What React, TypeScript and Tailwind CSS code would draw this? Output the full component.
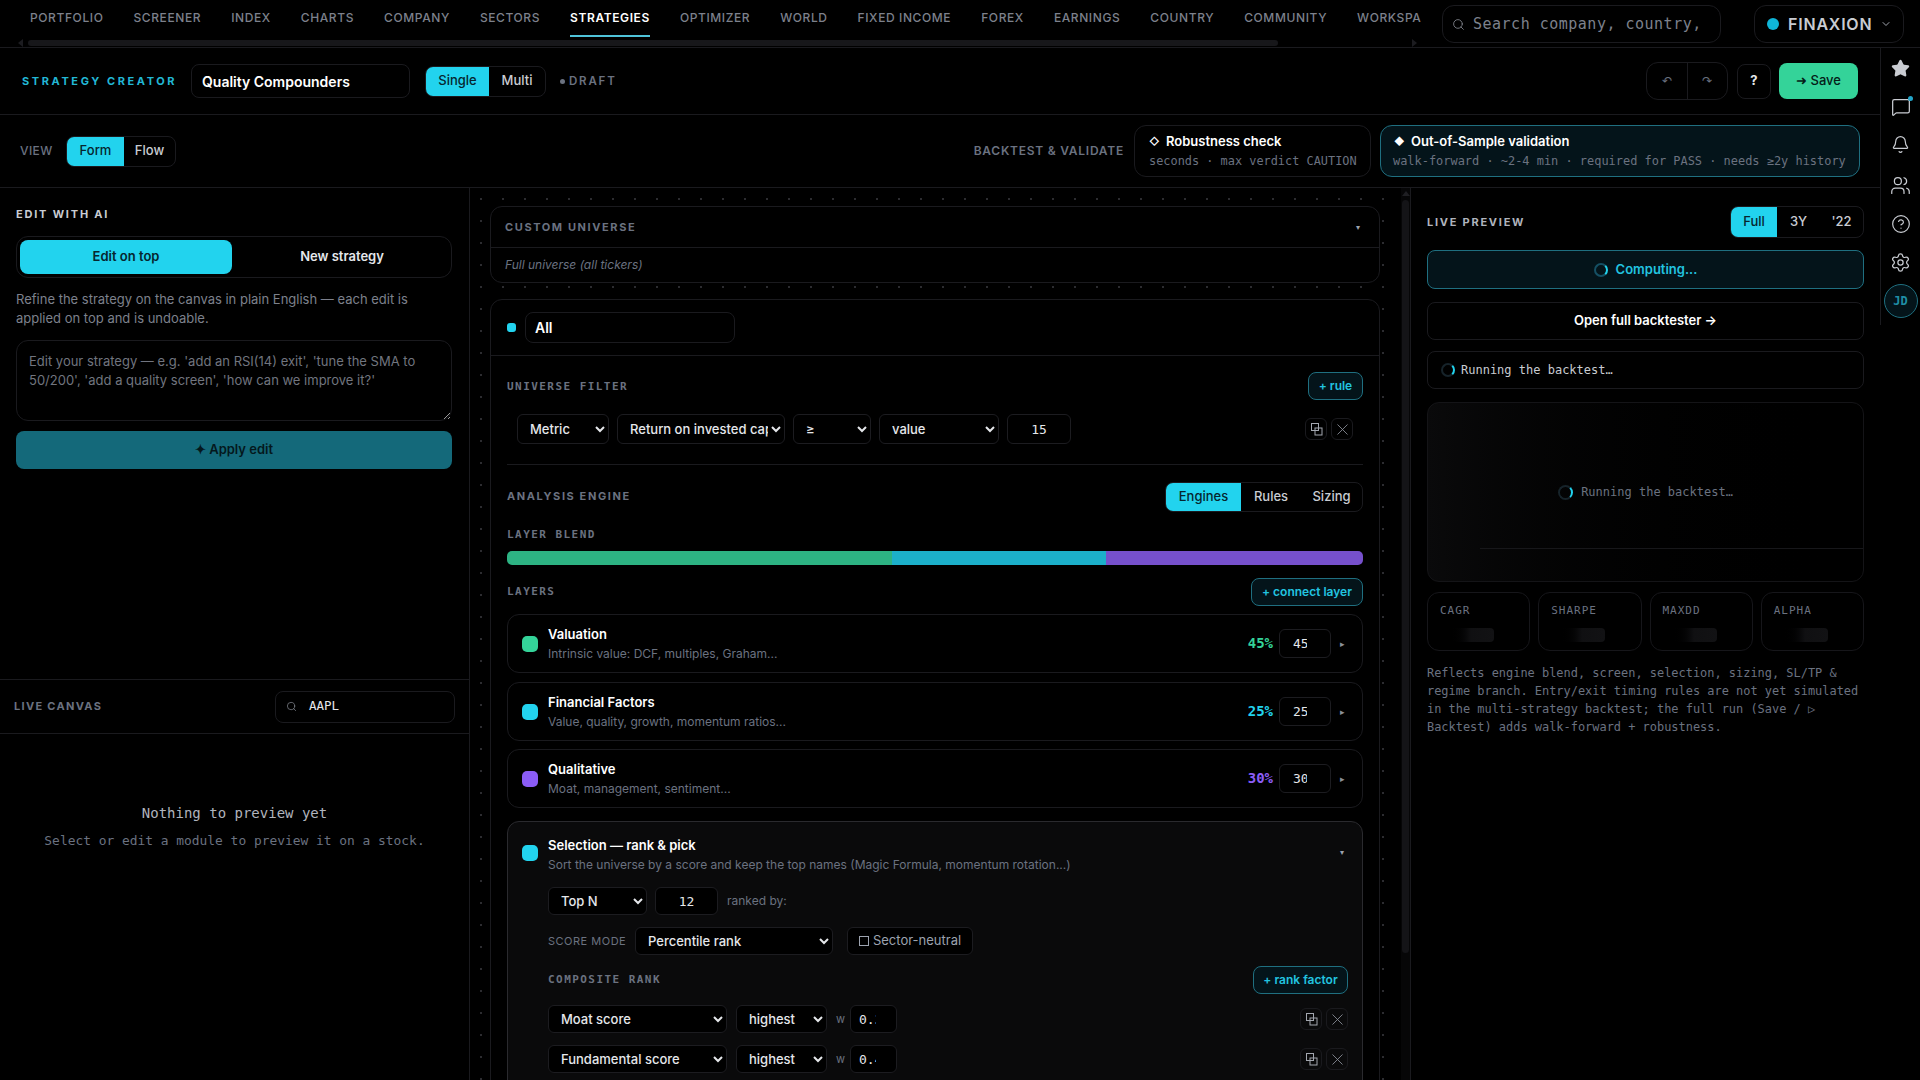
import React from "react";
import { Search, ChevronDown, Star, MessageSquare, Bell, Users, CircleHelp, Settings, X } from "lucide-react";

const MONO = "font-['DejaVu_Sans_Mono',monospace]";

function Sel({ cls, children }: { cls: string; children: string }) {
  return (
    <select className={"h-full rounded-md border border-[#1c1c20] bg-black pl-2 text-[13px] font-medium text-[#e5e7eb] [color-scheme:dark] " + cls}>
      <option>{children}</option>
    </select>
  );
}

function Num({ cls, v, type }: { cls: string; v: string; type?: string }) {
  return (
    <input type={type ?? "number"} defaultValue={v} className={"h-full rounded-md border border-[#1c1c20] bg-black text-[13px] text-[#e5e7eb] [color-scheme:dark] font-['DejaVu_Sans_Mono',monospace] " + cls} />
  );
}

function CopyIcon() {
  return (
    <svg width="13" height="13" viewBox="0 0 13 13" fill="none" stroke="#a3a7b0" strokeWidth="1">
      <rect x="1.5" y="0.5" width="7" height="7" />
      <rect x="5" y="5" width="7" height="7" />
    </svg>
  );
}

function RowActions({ cls }: { cls: string }) {
  return (
    <div className={"flex items-center gap-[4px] " + cls}>
      <div className="flex h-[22px] w-[22px] items-center justify-center rounded-md border border-[#1a1a1e]"><CopyIcon /></div>
      <div className="flex h-[22px] w-[22px] items-center justify-center rounded-md border border-[#1a1a1e]"><X size={19} strokeWidth={1.1} color="#8b8f98" /></div>
    </div>
  );
}

function Spinner({ cls }: { cls: string }) {
  return <div className={"rounded-full border-2 border-[#16232a] border-r-[#22d3ee] " + cls} />;
}

function MonoLabel({ children }: { children: string }) {
  return <div className="font-['DejaVu_Sans_Mono',monospace] text-[11px] font-bold tracking-[1.45px] text-[#6b7280]">{children}</div>;
}

function Layer({ color, text, title, desc, pct }: { color: string; text: string; title: string; desc: string; pct: string }) {
  return (
    <div className="flex h-[59px] items-center rounded-xl border border-[#1a1a1e] pl-[14px] pr-[14px]">
      <div className={"h-[16px] w-[16px] rounded-[5px] " + color} />
      <div className="ml-[10px] flex-1">
        <div className="text-[13px] font-semibold leading-[18px] text-white">{title}</div>
        <div className="mt-[2px] text-[12px] leading-[18px] text-[#6b7280]">{desc}</div>
      </div>
      <div className={"font-['DejaVu_Sans_Mono',monospace] text-[14px] font-bold " + text}>{pct}%</div>
      <div className="ml-[6px] h-[29px]"><Num cls="w-[52px] pl-[13px] pr-[8px] text-center" v={pct} /></div>
      <div className="ml-[9px] w-[8px] text-[9px] text-[#8b8f98]">▸</div>
    </div>
  );
}

function Metric({ label }: { label: string }) {
  return (
    <div className="h-[59px] flex-1 rounded-xl border border-[#16161a] pl-[12px] pt-[10px]">
      <div className="font-['DejaVu_Sans_Mono',monospace] text-[11px] leading-[16px] tracking-[1px] text-[#6b7280]">{label}</div>
      <div className="ml-[8px] mt-[9px] h-[14px] w-[46px] rounded bg-gradient-to-r from-black via-[#101012] to-[#121214]" />
    </div>
  );
}

const NAV = ["PORTFOLIO", "SCREENER", "INDEX", "CHARTS", "COMPANY", "SECTORS", "STRATEGIES", "OPTIMIZER", "WORLD", "FIXED INCOME", "FOREX", "EARNINGS", "COUNTRY", "COMMUNITY", "WORKSPACE"];

export default function App() {
  return (
    <div className="flex h-screen w-full flex-col overflow-hidden bg-black font-['Inter',sans-serif] text-[#e5e7eb]">
      {/* top nav */}
      <div className="flex h-[48px] shrink-0 items-start border-b border-[#1a1a1e]">
        <div className="w-[1421px] shrink-0 overflow-hidden">
          <div className="flex h-[37px] items-start gap-[30px] pl-[30px]">
            {NAV.map((n) => (
              <div key={n} className={n === "STRATEGIES" ? "flex h-[37px] shrink-0 items-center border-b-2 border-[#4fc3d9] pt-[1px] text-[12px] font-semibold tracking-[0.6px] text-white" : "flex h-[37px] shrink-0 items-center pb-[1px] text-[12px] font-medium tracking-[0.6px] text-[#7d818c]"}>{n}</div>
            ))}
          </div>
          <div className="mt-[2px] flex items-center pl-[18px]">
            <div className="h-0 w-0 border-y-[4px] border-r-[5px] border-y-transparent border-r-[#1c1c20]" />
            <div className="ml-[5px] h-[6px] w-[1250px] rounded-full bg-[#17171a]" />
            <div className="ml-[134px] h-0 w-0 border-y-[4px] border-l-[5px] border-y-transparent border-l-[#1c1c20]" />
          </div>
        </div>
        <div className="ml-[21px] mt-[5px] flex h-[38px] w-[279px] items-center overflow-hidden rounded-xl border border-[#1a1a1e] pl-[9px]">
          <Search size={13} strokeWidth={1.5} color="#8b8f98" className="shrink-0" />
          <div className={MONO + " ml-[8px] whitespace-nowrap text-[15px] tracking-[0.5px] text-[#7d818c]"}>Search company, country,</div>
        </div>
        <div className="ml-[33px] mt-[5px] flex h-[38px] w-[150px] items-center rounded-xl border border-[#1a1a1e] pl-[12px]">
          <div className="h-[12px] w-[12px] rounded-full bg-[#0fb5d8]" />
          <div className="ml-[9px] text-[16px] font-semibold tracking-[0.8px] text-[#c9ccd2]">FINAXION</div>
          <ChevronDown size={12} color="#a0a4ad" className="ml-[8px]" />
        </div>
      </div>

      <div className="flex min-h-0 flex-1">
        {/* main */}
        <div className="flex min-w-0 flex-1 flex-col">
          {/* header */}
          <div className="flex h-[67px] shrink-0 items-center border-b border-[#1a1a1e] pl-[22px] pr-[22px]">
            <div className="w-[169px] whitespace-nowrap text-[11px] font-bold tracking-[2.6px] text-[#22b8d6]">STRATEGY CREATOR</div>
            <div className="flex h-[34px] w-[219px] items-center rounded-lg border border-[#1a1a1e] pl-[10px] text-[14px] font-semibold text-white">Quality Compounders</div>
            <div className="ml-[15px] flex h-[31px] w-[121px] overflow-hidden rounded-lg border border-[#1a1a1e]">
              <div className="flex w-[63px] items-center justify-center bg-[#22d3ee] text-[13px] font-medium text-[#06262e]">Single</div>
              <div className="flex flex-1 items-center justify-center text-[13px] font-medium text-[#c9ccd2]">Multi</div>
            </div>
            <div className="ml-[14px] flex items-center pt-[1px] text-[11.5px] font-semibold tracking-[1.8px] text-[#6b7280]">
              <div className="mr-[4px] h-[5px] w-[5px] rounded-full bg-[#6b7280]" />DRAFT
            </div>
            <div className="flex-1" />
            <div className="flex h-[38px] w-[82px] rounded-xl border border-[#1a1a1e] text-[12px] text-[#6b7280]">
              <div className="flex flex-1 items-center justify-center border-r border-[#1a1a1e]">↶</div>
              <div className="flex flex-1 items-center justify-center">↷</div>
            </div>
            <div className="ml-[9px] flex h-[35px] w-[34px] items-center justify-center rounded-lg border border-[#1a1a1e] text-[13px] font-bold text-[#e5e7eb]">?</div>
            <div className="ml-[8px] flex h-[36px] w-[79px] items-center justify-center rounded-lg bg-[#34d399] text-[13px] font-medium text-[#042017]">➜&nbsp;Save</div>
          </div>
          {/* toolbar */}
          <div className="flex h-[73px] shrink-0 items-center border-b border-[#1a1a1e] pl-[20px] pr-[20px]">
            <div className="w-[46px] text-[12px] font-medium tracking-[0.4px] text-[#6b7280]">VIEW</div>
            <div className="flex h-[31px] w-[110px] overflow-hidden rounded-lg border border-[#1a1a1e]">
              <div className="flex w-[57px] items-center justify-center bg-[#22d3ee] text-[13px] font-medium text-[#06262e]">Form</div>
              <div className="flex flex-1 items-center justify-center text-[13px] font-medium text-[#c9ccd2]">Flow</div>
            </div>
            <div className="flex-1" />
            <div className="text-[12px] font-semibold tracking-[0.75px] text-[#6b7280]">BACKTEST &amp; VALIDATE</div>
            <div className="ml-[10px] h-[52px] w-[237px] rounded-xl border border-[#1a1a1e] pl-[14px] pt-[6px]">
              <div className="flex items-center text-[13px] font-semibold leading-[18px] text-white"><span className="w-[17px] text-[10px] font-bold">◇</span>Robustness check</div>
              <div className={MONO + " mt-[2px] whitespace-nowrap text-[11.9px] leading-[18px] text-[#6b7280]"}>seconds · max verdict CAUTION</div>
            </div>
            <div className="ml-[9px] h-[52px] w-[480px] rounded-xl border border-[#1f6f80] bg-[#04141a] pl-[12px] pt-[6px]">
              <div className="flex items-center text-[13px] font-semibold leading-[18px] text-white"><span className="w-[18px] pl-[1px] text-[10px]">◆</span>Out-of-Sample validation</div>
              <div className={MONO + " mt-[2px] whitespace-nowrap text-[11.95px] leading-[18px] text-[#6b7280]"}>walk-forward · ~2-4 min · required for PASS · needs ≥2y history</div>
            </div>
          </div>

          {/* columns */}
          <div className="flex min-h-0 flex-1">
            {/* left */}
            <div className="flex w-[470px] shrink-0 flex-col border-r border-[#1a1a1e]">
              <div className="h-[492px] shrink-0 border-b border-[#1a1a1e] pl-[16px] pr-[17px] pt-[19px]">
                <div className="text-[11px] font-bold leading-[14px] tracking-[1.8px] text-[#c9ccd2]">EDIT WITH AI</div>
                <div className="mt-[15px] flex h-[42px] items-center rounded-xl border border-[#1a1a1e] px-[3px]">
                  <div className="flex h-[34px] w-[212px] items-center justify-center rounded-lg bg-[#22d3ee] text-[13px] font-semibold text-[#06262e]">Edit on top</div>
                  <div className="flex flex-1 items-center justify-center pl-[4px] text-[13px] font-semibold text-[#e5e7eb]">New strategy</div>
                </div>
                <div className="mt-[12px] text-[13px] leading-[19px] text-[#7d818c]">Refine the strategy on the canvas in plain English — each edit is applied on top and is undoable.</div>
                <textarea
                  className="mt-[12px] block h-[81px] w-full rounded-xl border border-[#1a1a1e] bg-black px-[12px] pb-[8px] pt-[11px] text-[13px] leading-[19px] text-[#e5e7eb] [color-scheme:dark] placeholder:text-[#71757f]"
                  placeholder="Edit your strategy — e.g. 'add an RSI(14) exit', 'tune the SMA to 50/200', 'add a quality screen', 'how can we improve it?'"
                />
                <div className="mt-[10px] flex h-[38px] items-center justify-center rounded-lg bg-[#14697a] text-[13px] font-semibold text-[#04181d]">✦ Apply edit</div>
              </div>
              <div className="flex h-[54px] shrink-0 items-center justify-between border-b border-[#1a1a1e] pl-[14px] pr-[14px]">
                <div className="text-[11px] font-bold tracking-[1.3px] text-[#6b7280]">LIVE CANVAS</div>
                <div className="flex h-[32px] w-[180px] items-center rounded-lg border border-[#1a1a1e] pl-[10px]">
                  <Search size={11} strokeWidth={1.5} color="#8b8f98" />
                  <div className={MONO + " ml-[12px] text-[12.5px] font-medium text-[#e5e7eb]"}>AAPL</div>
                </div>
              </div>
              <div className="pt-[69px] text-center">
                <div className={MONO + " text-[14px] leading-[20px] text-[#b0b4bd]"}>Nothing to preview yet</div>
                <div className={MONO + " mt-[8px] text-[12.9px] leading-[20px] text-[#6b7280]"}>Select or edit a module to preview it on a stock.</div>
              </div>
            </div>

            {/* center */}
            <div className="flex w-[940px] shrink-0 overflow-hidden">
              <div className="min-w-0 flex-1 overflow-hidden bg-[radial-gradient(#2c2c30_1px,transparent_1px)] bg-[size:22px_22px] pl-[20px] pr-[21px] pt-[18px]">
                <div className="h-[77px] rounded-xl border border-[#1a1a1e] bg-black">
                  <div className="flex h-[41px] items-center justify-between border-b border-[#1a1a1e] pl-[14px] pr-[19px]">
                    <div className="text-[11px] font-bold tracking-[1.6px] text-[#6b7280]">CUSTOM UNIVERSE</div>
                    <div className="text-[8px] text-[#9ca3af]">▾</div>
                  </div>
                  <div className="flex h-[34px] items-center pl-[14px] text-[12px] italic text-[#6b7280]">Full universe (all tickers)</div>
                </div>
                <div className="mt-[16px] rounded-xl border border-[#1a1a1e] bg-black pb-[40px]">
                  <div className="flex h-[56px] items-center border-b border-[#1a1a1e] pl-[16px]">
                    <div className="h-[9px] w-[9px] rounded-[3px] bg-[#22d3ee]" />
                    <div className="ml-[9px] flex h-[31px] w-[210px] items-center rounded-lg border border-[#1a1a1e] pl-[9px] text-[14px] font-semibold text-white">All</div>
                  </div>
                  <div className="pl-[16px] pr-[16px]">
                    <div className="mt-[16px] flex h-[28px] items-center justify-between">
                      <div className="pt-[2px]"><MonoLabel>UNIVERSE FILTER</MonoLabel></div>
                      <div className="flex h-[28px] w-[55px] items-center justify-center rounded-lg border border-[#1f6f80] bg-[#04141a] text-[12px] font-semibold text-[#22c4e0]">+ rule</div>
                    </div>
                    <div className="mt-[14px] flex h-[30px] items-center gap-[8px] pl-[10px]">
                      <Sel cls="w-[92px]">Metric</Sel>
                      <Sel cls="w-[168px]">Return on invested capital</Sel>
                      <Sel cls="w-[78px]">≥</Sel>
                      <Sel cls="w-[120px]">value</Sel>
                      <Num cls="w-[64px] px-2 text-center" v="15" type="text" />
                      <RowActions cls="ml-auto mr-[10px]" />
                    </div>
                    <div className="mt-[20px] h-px bg-[#1a1a1e]" />
                    <div className="mt-[17px] flex h-[30px] items-center justify-between">
                      <div className="pb-[2px] text-[11px] font-bold tracking-[1.6px] text-[#6b7280]">ANALYSIS ENGINE</div>
                      <div className="flex h-[30px] w-[198px] overflow-hidden rounded-lg border border-[#1a1a1e] text-[13px] font-medium">
                        <div className="flex w-[75px] items-center justify-center bg-[#22d3ee] text-[#06262e]">Engines</div>
                        <div className="flex w-[60px] items-center justify-center text-[#c9ccd2]">Rules</div>
                        <div className="flex flex-1 items-center justify-center text-[#c9ccd2]">Sizing</div>
                      </div>
                    </div>
                    <div className="mt-[15px] leading-[15px]"><MonoLabel>LAYER BLEND</MonoLabel></div>
                    <div className="mt-[9px] flex h-[14px] overflow-hidden rounded-[5px]">
                      <div className="w-[45%] bg-[#2db383]" />
                      <div className="w-[25%] bg-[#1cb0ca]" />
                      <div className="w-[30%] bg-[#7650cc]" />
                    </div>
                    <div className="mt-[13px] flex h-[28px] items-center justify-between">
                      <MonoLabel>LAYERS</MonoLabel>
                      <div className="flex h-[28px] w-[112px] items-center justify-center rounded-lg border border-[#1f6f80] bg-[#04141a] text-[12px] font-semibold text-[#22c4e0]">+ connect layer</div>
                    </div>
                    <div className="mt-[8px] flex flex-col">
                      <Layer color="bg-[#34d399]" text="text-[#34d399]" title="Valuation" desc="Intrinsic value: DCF, multiples, Graham..." pct="45" />
                      <div className="mt-[9px]"><Layer color="bg-[#22d3ee]" text="text-[#22d3ee]" title="Financial Factors" desc="Value, quality, growth, momentum ratios..." pct="25" /></div>
                      <div className="mt-[8px]"><Layer color="bg-[#8b5cf6]" text="text-[#8b5cf6]" title="Qualitative" desc="Moat, management, sentiment..." pct="30" /></div>
                    </div>
                    {/* selection */}
                    <div className="mt-[13px] rounded-xl border border-[#2a2a2e] bg-[#0a0a0b] pb-[40px] pl-[40px] pr-[14px] pt-[14px]">
                      <div className="relative">
                        <div className="absolute left-[-26px] top-[9px] h-[16px] w-[16px] rounded-[5px] bg-[#22d3ee]" />
                        <div className="text-[13px] font-semibold leading-[18px] text-white">Selection — rank &amp; pick</div>
                        <div className="mt-[2px] text-[12px] leading-[18px] text-[#6b7280]">Sort the universe by a score and keep the top names (Magic Formula, momentum rotation...)</div>
                        <div className="absolute right-[4px] top-[10px] text-[8px] text-[#9ca3af]">▾</div>
                      </div>
                      <div className="mt-[13px] flex h-[28px] items-center gap-[8px]">
                        <Sel cls="w-[99px]">Top N</Sel>
                        <Num cls="w-[63px] px-2 text-center" v="12" type="text" />
                        <div className="ml-[1px] text-[12px] text-[#6b7280]">ranked by:</div>
                      </div>
                      <div className="mt-[12px] flex h-[28px] items-center">
                        <div className="w-[87px] text-[11px] tracking-[0.5px] text-[#6b7280]">SCORE MODE</div>
                        <Sel cls="w-[198px]">Percentile rank</Sel>
                        <div className="ml-[14px] flex h-[28px] w-[126px] items-center justify-center rounded-md border border-[#1c1c20] bg-black text-[13px] text-[#9ca3af]"><span className="mr-[4px] h-[10px] w-[10px] border border-[#9ca3af]" />Sector-neutral</div>
                      </div>
                      <div className="mt-[11px] flex h-[28px] items-center justify-between">
                        <MonoLabel>COMPOSITE RANK</MonoLabel>
                        <div className="flex h-[28px] w-[95px] items-center justify-center rounded-lg border border-[#1f6f80] bg-[#04141a] text-[12px] font-semibold text-[#22c4e0]">+ rank factor</div>
                      </div>
                      <div className="mt-[11px] flex h-[28px] items-center gap-[9px]">
                        <Sel cls="w-[179px]">Moat score</Sel>
                        <Sel cls="w-[91px]">highest</Sel>
                        <div className="w-[5px] text-[11px] text-[#6b7280]">w</div>
                        <Num cls="w-[47px] pl-2 pr-[5px]" v="0.35" />
                        <RowActions cls="ml-auto" />
                      </div>
                      <div className="mt-[12px] flex h-[28px] items-center gap-[9px]">
                        <Sel cls="w-[179px]">Fundamental score</Sel>
                        <Sel cls="w-[91px]">highest</Sel>
                        <div className="w-[5px] text-[11px] text-[#6b7280]">w</div>
                        <Num cls="w-[47px] pl-2 pr-[5px]" v="0.45" />
                        <RowActions cls="ml-auto" />
                      </div>
                    </div>
                  </div>
                </div>
              </div>
              {/* center scrollbar */}
              <div className="flex w-[9px] shrink-0 flex-col items-center bg-[#060607] pt-[3px]">
                <div className="h-0 w-0 border-x-[4px] border-b-[5px] border-x-transparent border-b-[#1f1f23]" />
                <div className="mt-[4px] h-[753px] w-[7px] rounded-full bg-[#141417]" />
              </div>
            </div>

            {/* right */}
            <div className="min-w-0 flex-1 border-l border-[#1a1a1e] pl-[16px] pr-[16px] pt-[18px]">
              <div className="flex h-[32px] items-center justify-between">
                <div className="text-[11px] font-bold tracking-[1.75px] text-[#b0b4bd]">LIVE PREVIEW</div>
                <div className="flex h-[32px] w-[134px] overflow-hidden rounded-lg border border-[#1a1a1e] text-[13px] font-medium">
                  <div className="flex w-[46px] items-center justify-center bg-[#22d3ee] text-[#06262e]">Full</div>
                  <div className="flex w-[43px] items-center justify-center text-[#c9ccd2]">3Y</div>
                  <div className="flex flex-1 items-center justify-center text-[#c9ccd2]">'22</div>
                </div>
              </div>
              <div className="mt-[12px] flex h-[39px] items-center justify-center rounded-lg border border-[#1f6f80] bg-[#04141a] text-[13px] font-semibold text-[#22c4e0]">
                <Spinner cls="mr-[8px] h-[14px] w-[14px] border-[#155064] border-r-[#22d3ee]" />Computing...
              </div>
              <div className="mt-[13px] flex h-[38px] items-center justify-center rounded-lg border border-[#1a1a1e] text-[13px] font-semibold text-white">Open full backtester →</div>
              <div className={MONO + " mt-[11px] flex h-[38px] items-center rounded-lg border border-[#1a1a1e] pl-[13px] text-[12px] text-[#c9ccd2]"}>
                <Spinner cls="mr-[6px] h-[14px] w-[14px]" />Running the backtest…
              </div>
              <div className="relative mt-[13px] flex h-[180px] items-center justify-center rounded-xl border border-[#141417] bg-gradient-to-r from-[#0a0a0b] to-black text-[12px]">
                <Spinner cls="mr-[8px] h-[15px] w-[15px]" />
                <span className={MONO + " text-[#6b7280]"}>Running the backtest…</span>
                <div className="absolute bottom-[32px] left-[52px] right-0 h-px bg-[#17171a]" />
              </div>
              <div className="mt-[10px] flex gap-[8px]">
                <Metric label="CAGR" />
                <Metric label="SHARPE" />
                <Metric label="MAXDD" />
                <Metric label="ALPHA" />
              </div>
              <div className={MONO + " mt-[13px] text-[11.95px] leading-[18px] text-[#6b7280]"}>Reflects engine blend, screen, selection, sizing, SL/TP &amp; regime branch. Entry/exit timing rules are not yet simulated in the multi-strategy backtest; the full run (Save / ▷ Backtest) adds walk-forward + robustness.</div>
            </div>
          </div>
        </div>

        {/* side rail */}
        <div className="flex h-[277px] w-[40px] shrink-0 flex-col items-center border-l border-[#1a1a1e] pt-[11px]">
          <Star size={19} fill="#c9ccd2" color="#c9ccd2" />
          <div className="relative mt-[19px]">
            <MessageSquare size={20} strokeWidth={1.5} color="#c9ccd2" />
            <div className="absolute right-[-2px] top-[-1px] h-[5px] w-[5px] rounded-full bg-[#22a5c9]" />
          </div>
          <Bell size={19} strokeWidth={1.5} color="#c9ccd2" className="mt-[18px]" />
          <Users size={21} strokeWidth={1.4} color="#c9ccd2" className="mt-[21px]" />
          <CircleHelp size={20} strokeWidth={1.4} color="#c9ccd2" className="mt-[18px]" />
          <Settings size={21} strokeWidth={1.4} color="#c9ccd2" className="mt-[18px]" />
          <div className={MONO + " mt-[11px] flex h-[34px] w-[34px] shrink-0 items-center justify-center rounded-full border border-[#1f6f80] bg-[#04141a] text-[12px] font-bold text-[#1f8ea6]"}>JD</div>
        </div>
      </div>
    </div>
  );
}
